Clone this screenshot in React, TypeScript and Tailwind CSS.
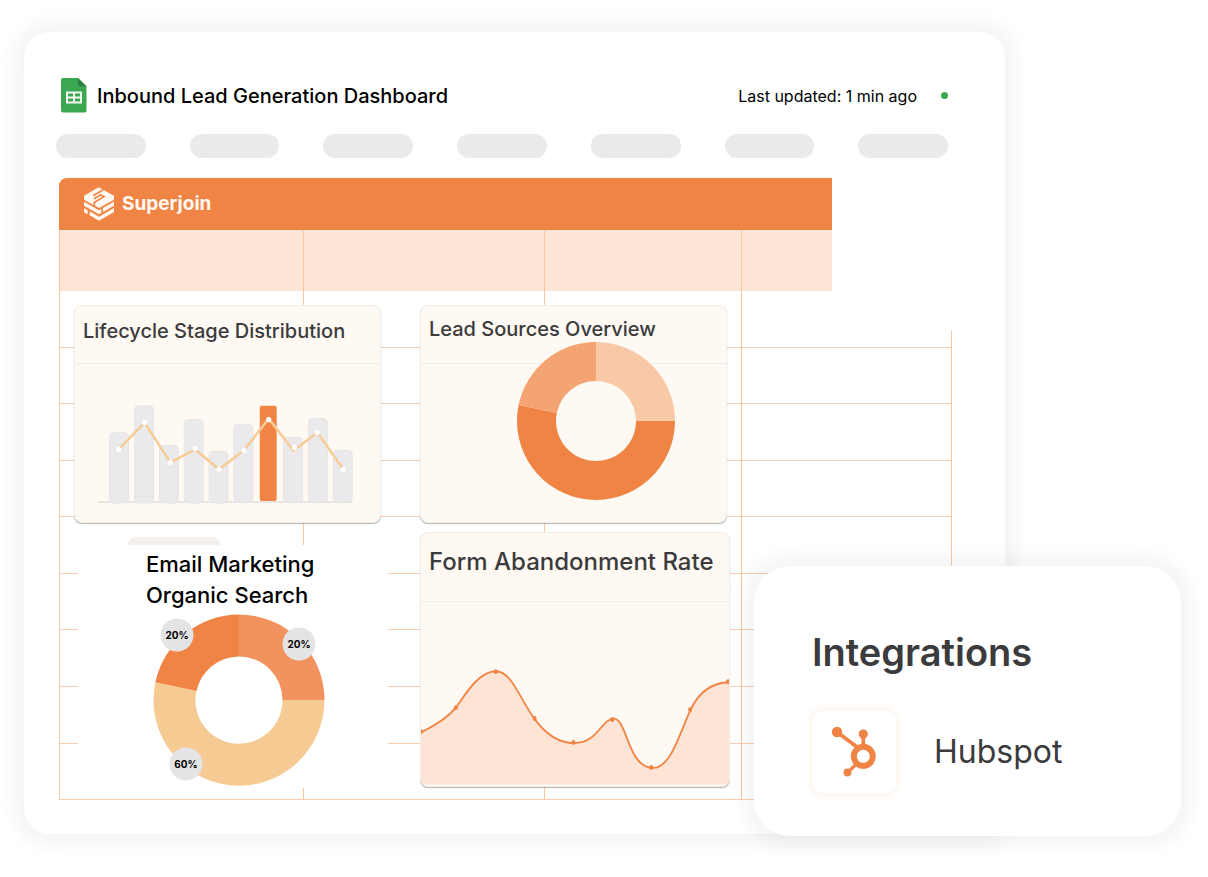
import React from 'react';

const pills = [0, 1, 2, 3, 4, 5, 6];
const gridRows = [0, 1, 2, 3, 4, 5, 6, 7, 8];

const bars = [
  { x: 35, y: 69, h: 71 },
  { x: 60, y: 42, h: 98 },
  { x: 85, y: 82, h: 58 },
  { x: 110, y: 56, h: 84 },
  { x: 135, y: 88, h: 52 },
  { x: 160, y: 61, h: 78 },
  { x: 186, y: 42, h: 96, active: true },
  { x: 210, y: 74, h: 65 },
  { x: 235, y: 55, h: 84 },
  { x: 260, y: 87, h: 52 },
];

const barPoints = [
  [44, 86],
  [70, 59],
  [96, 99],
  [121, 85],
  [145, 106],
  [170, 87],
  [195, 56],
  [221, 84],
  [244, 69],
  [270, 106],
];

const ratePoints = [
  [0, 130],
  [35, 106],
  [75, 70],
  [114, 117],
  [153, 141],
  [192, 118],
  [231, 166],
  [270, 108],
  [308, 80],
];

const rateCurve =
  'M0 131C12 125 26 117 35 106C45 92 58 69.500 75 69.500C91 69.500 99 97 114 117.500C124 131 138 141.500 153.500 141.500C178 141.500 181 117 193.500 117C207 117 207 166.500 233 166.500C251 166.500 260 130 270.500 108C279 90 292 81 309 80.500';

function SheetsIcon() {
  return (
    <svg className="h-[35px] w-[26px] shrink-0" viewBox="0 0 26 35" aria-hidden="true">
      <path d="M2 0H17L25.500 8.500V32.500Q25.500 34.500 24 34.500H2Q0 34.500 0 32.500V2Q0 0 2 0Z" fill="#3aa850" />
      <path d="M17 0L25.500 8.500H19Q17 8.500 17 6.500Z" fill="#2f7d41" />
      <path
        fillRule="evenodd"
        d="M5 13.500H21V25.500H5ZM7 15.500V18.500H12V15.500ZM14 15.500V18.500H19V15.500ZM7 20.500V23.500H12V20.500ZM14 20.500V23.500H19V20.500Z"
        fill="#f3f7f2"
      />
    </svg>
  );
}

function SuperjoinLogo() {
  return (
    <svg className="h-[34px] w-[30px]" viewBox="0 0 90 100" aria-hidden="true">
      <g fill="#fff9f2">
        <path d="M44 0L90 25V37L45 62L30 54L0 37V25Z" />
        <path d="M0 43L45 69L52 65V77L45 81L0 55Z" />
        <path d="M57 62L90 43V55L57 74Z" />
        <path d="M0 63L11 69V81L0 75Z" />
        <path d="M17 72L45 88L90 62V74L45 100L17 84Z" />
      </g>
      <g fill="none" stroke="#ef8444" strokeWidth="5">
        <path d="M58 7L27 25" />
        <path d="M31 56V45L60 28L50 23L30 34" />
      </g>
    </svg>
  );
}

function HubspotIcon() {
  return (
    <svg className="h-[52px] w-[46px]" viewBox="0 0 46 52" aria-hidden="true">
      <g fill="#ef8444" stroke="#ef8444">
        <circle cx="6" cy="6" r="5.200" stroke="none" />
        <circle cx="32.300" cy="8" r="4.600" stroke="none" />
        <circle cx="16.500" cy="46.500" r="3.900" stroke="none" />
        <path d="M6 6L26 21" strokeWidth="3.800" />
        <path d="M32.300 8V20" strokeWidth="3.800" />
        <path d="M17 46L26 37.500" strokeWidth="3.200" />
        <circle cx="32.300" cy="30.300" r="9.500" fill="none" strokeWidth="6" />
      </g>
    </svg>
  );
}

function BarChart() {
  return (
    <svg className="block w-full" viewBox="0 0 307 158" role="img" aria-label="Lifecycle Stage Distribution">
      <path d="M23 139H279" stroke="#eae5e2" strokeWidth="2" />
      {bars.map((bar) => (
        <rect
          key={bar.x}
          x={bar.x}
          y={bar.y}
          width={bar.active ? 17 : 19}
          height={bar.h}
          rx={bar.active ? 2 : 4}
          fill={bar.active ? '#ef8444' : '#eaeaec'}
          stroke={bar.active ? 'none' : '#e8e4e3'}
        />
      ))}
      <polyline
        points="44,86 70,59 96,99 121,86 145,106 170,87 195,55 220,87 244,69 270,106"
        fill="none"
        stroke="#f7cb95"
        strokeWidth="2.500"
      />
      {barPoints.map(([x, y]) => (
        <circle key={x} cx={x} cy={y} r="2.600" fill="#fff" />
      ))}
    </svg>
  );
}

function LeadSourcesDonut() {
  return (
    <svg className="h-[158px] w-[158px]" viewBox="0 0 158 158" role="img" aria-label="Lead Sources">
      <path d="M79 0A79 79 0 0 1 158 79H119A40 40 0 0 0 79 39Z" fill="#f8c8a7" />
      <path d="M158 79A79 79 0 1 1 1.600 63.100L39.800 71A40 40 0 1 0 119 79Z" fill="#ef8444" />
      <path d="M1.600 63.100A79 79 0 0 1 79 0V39A40 40 0 0 0 39.800 71Z" fill="#f4a473" />
    </svg>
  );
}

function SearchDonut() {
  const badges = [
    { x: 24, y: 21, label: '20%' },
    { x: 146, y: 30, label: '20%' },
    { x: 33, y: 150, label: '60%' },
  ];
  return (
    <svg className="h-[172px] w-[172px]" viewBox="0 0 172 172" overflow="visible">
      <path d="M86 .5A85.500 85.500 0 0 1 171.500 86H129.500A43.500 43.500 0 0 0 86 42.500Z" fill="#f2935f" />
      <path d="M171.500 86A85.500 85.500 0 1 1 2.400 68.200L43.500 77A43.500 43.500 0 1 0 129.500 86Z" fill="#f6cb93" />
      <path d="M2.400 68.200A85.500 85.500 0 0 1 86 .5V42.500A43.500 43.500 0 0 0 43.500 77Z" fill="#ef8444" />
      {badges.map((badge) => (
        <g key={badge.y}>
          <circle cx={badge.x} cy={badge.y} r="16.500" fill="#e5e4e4" />
          <text x={badge.x} y={badge.y + 4} textAnchor="middle" className="fill-black text-[10px] font-bold">
            {badge.label}
          </text>
        </g>
      ))}
    </svg>
  );
}

function RateChart() {
  return (
    <svg className="block w-full" viewBox="0 0 309 184" role="img" aria-label="Form Abandonment Rate">
      <path d={`${rateCurve}V183H0Z`} fill="#fee4d4" />
      <path d={rateCurve} fill="none" stroke="#ef8444" strokeWidth="1.800" />
      {ratePoints.map(([x, y]) => (
        <ellipse key={x} cx={x} cy={y} rx="2" ry="2.500" fill="#ef8444" />
      ))}
    </svg>
  );
}

interface CardProps {
  title: string;
  className: string;
  headerClass: string;
  children: React.ReactNode;
}

function Card({ title, className, headerClass, children }: CardProps) {
  return (
    <article
      className={`overflow-hidden rounded-lg border border-[#f3eeea] bg-[#fff9f3] text-[#3b3b3d] shadow-[0_1px_1px_rgba(0,0,0,0.3)] ${className}`}
    >
      <h2 className={`border-b border-[#f0ecea] pl-2 font-medium ${headerClass}`}>{title}</h2>
      {children}
    </article>
  );
}

function GridLines() {
  return (
    <>
      <div className="col-start-1 row-start-1 mr-[120px] h-[61px] bg-[#fee5d5]" />
      <div className="col-start-1 row-start-1 grid grid-cols-[245fr_241fr_197fr_210fr]">
        <div className="border-x border-[#f8c9a3]" />
        <div className="border-r border-[#f8c9a3]" />
        <div className="border-r border-[#f8c9a3]" />
        <div className="mt-[100px] border-r border-[#f8c9a3]" />
      </div>
      <div className="col-start-1 row-start-1 mt-[61px] flex flex-col">
        {gridRows.map((row) => (
          <div key={row} className="flex-1 border-b border-[#f9cdad]" />
        ))}
      </div>
    </>
  );
}

export default function App() {
  return (
    <div className="min-h-screen bg-white pt-8 pr-[27px] pb-10 pl-6 font-[Inter,'Liberation_Sans',sans-serif] text-black">
      <div className="relative">
        <main className="mr-[176px] rounded-[26px] bg-white pt-[46px] pr-[53px] pb-[34px] pl-8 shadow-[0_0_16px_12px_rgba(0,0,0,0.04)]">
          <header className="mr-1 flex items-center pl-[5px]">
            <SheetsIcon />
            <h1 className="ml-[10px] text-[20px] leading-6 font-medium">Inbound Lead Generation Dashboard</h1>
            <p className="ml-auto text-[16px] leading-6">Last updated: 1 min ago</p>
            <span className="ml-6 size-[7px] rounded-full bg-[#3aa850]" />
          </header>

          <div className="mt-[21px] mr-1 flex gap-11">
            {pills.map((pill) => (
              <div key={pill} className="h-6 flex-1 rounded-full bg-[#eaeaec]" />
            ))}
          </div>

          <section className="mt-5 ml-[3px]">
            <div className="mr-[120px] flex h-[52px] items-center gap-2 rounded-tl-lg bg-[#ef8444] pl-[25px] text-[#fff9f2]">
              <SuperjoinLogo />
              <span className="text-[19px] leading-6 font-bold">Superjoin</span>
            </div>

            <div className="grid grid-cols-1">
              <GridLines />

              <div className="col-start-1 row-start-1 grid grid-cols-[314fr_310fr] items-start gap-8 pt-[75px] pr-[222px] pb-3 pl-[15px]">
                <div className="flex flex-col">
                  <Card
                    title="Lifecycle Stage Distribution"
                    className="mr-[7px] h-[218px]"
                    headerClass="h-[58px] text-[20px] leading-[50px]"
                  >
                    <BarChart />
                  </Card>
                  <div className="mt-[14px] ml-[54px] h-2 w-[92px] rounded-t-lg bg-[#f5f0ee]" />
                  <div className="ml-1 flex flex-col bg-white pt-1">
                    <h2 className="ml-[68px] text-[22px] leading-[31px] font-medium">
                      Email Marketing
                      <br />
                      Organic Search
                    </h2>
                    <div className="mt-[3px] mb-[2px] ml-[75px]">
                      <SearchDonut />
                    </div>
                  </div>
                </div>

                <div className="flex flex-col gap-[9px]">
                  <Card
                    title="Lead Sources Overview"
                    className="mr-[3px] h-[218px]"
                    headerClass="h-[58px] text-[20px] leading-[46px]"
                  >
                    <div className="-mt-[22px] mr-[51px] flex justify-end">
                      <LeadSourcesDonut />
                    </div>
                  </Card>
                  <Card
                    title="Form Abandonment Rate"
                    className="h-[255px]"
                    headerClass="h-[69px] text-[24px] leading-[58px]"
                  >
                    <RateChart />
                  </Card>
                </div>
              </div>
            </div>
          </section>
        </main>

        <aside className="absolute right-0 -bottom-[2px] h-[270px] w-[427px] rounded-[36px] bg-white px-[58px] pt-[62px] text-[#3b3b3d] shadow-[0_0_16px_12px_rgba(60,20,0,0.04)]">
          <h2 className="text-[38px] leading-[48px] font-semibold">Integrations</h2>
          <div className="mt-[34px] flex items-center gap-[38px]">
            <div className="flex size-[84px] items-center justify-center rounded-xl bg-white shadow-[0_0_6px_2px_#fdf3ea]">
              <HubspotIcon />
            </div>
            <span className="text-[32px] leading-10">Hubspot</span>
          </div>
        </aside>
      </div>
    </div>
  );
}
